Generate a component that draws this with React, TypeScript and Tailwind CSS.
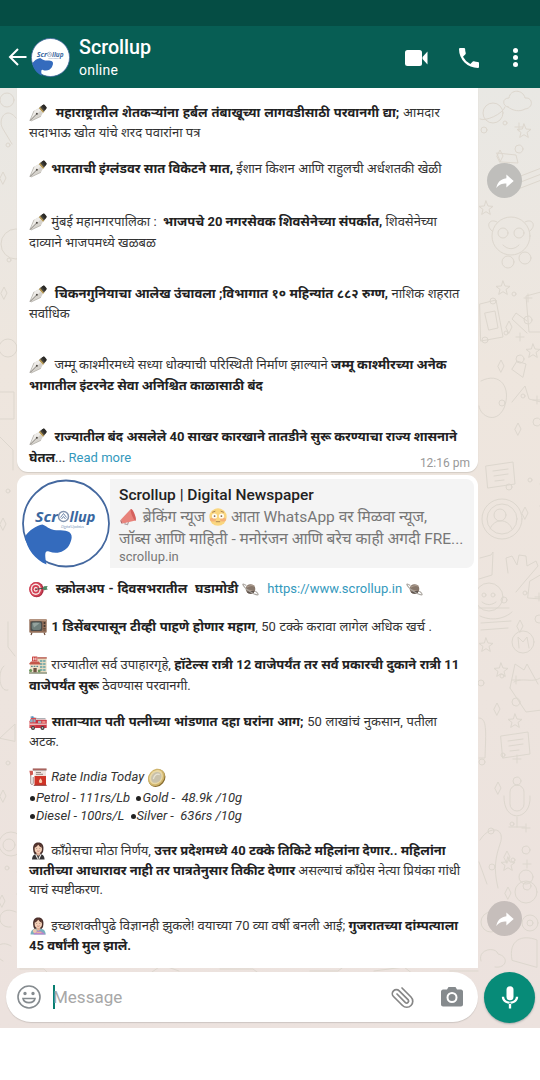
import type { ReactNode } from "react";

function Pen() {
  return (
    <svg viewBox="0 0 18 18" className="mr-px h-[18px] w-[18px] shrink-0">
      <path d="M10.5 3.2 14.6.6 17.6 4l-3 4.2z" fill="#45423b" />
      <path d="m14.6.6 1 .1 2 2.5L17.6 4 16 6.2 12.7 1.8z" fill="#2b2a27" />
      <path d="m9.6 4.2 1.6-1.1 3.9 4.6-1.2 1.4z" fill="#b79a55" />
      <path d="m9.7 4.3 4.1 4.6-1.9 3.5L2.2 17 1 16.2 5 6.8z" fill="#d6d3cd" />
      <path d="m9.7 4.3 1.9 2.2L1.5 16.5 1 16.2 5 6.8z" fill="#eeece8" />
      <path d="M1 16.6 7.6 10" stroke="#66615a" strokeWidth=".8" />
      <circle cx="7.9" cy="9.8" r="1" fill="#504c46" />
      <path d="M5 6.8 1 16.2l1.2.8 9.7-4.6" fill="none" stroke="#99958d" strokeWidth=".5" />
    </svg>
  );
}

function Target() {
  return (
    <svg viewBox="0 0 19 18" className="h-[18px] w-[19px] shrink-0">
      <ellipse cx="7.6" cy="9.6" rx="7.2" ry="7.7" fill="#a92f43" />
      <ellipse cx="6.8" cy="9.3" rx="6.6" ry="7.3" fill="#d44356" />
      <ellipse cx="6.8" cy="9.3" rx="5.1" ry="5.7" fill="#f6e9e8" />
      <ellipse cx="6.8" cy="9.3" rx="3.7" ry="4.2" fill="#d23e52" />
      <ellipse cx="6.8" cy="9.3" rx="2.1" ry="2.5" fill="#f7e9e8" />
      <circle cx="6.8" cy="9.3" r="1.1" fill="#c02d44" />
      <path d="m7 9.3 8-1.2" stroke="#454b45" strokeWidth="1" />
      <path d="m13.6 8.3 1.5-2 3.6-.3-1 2 1.1 1.6-3.6.6z" fill="#4f8a64" />
    </svg>
  );
}

function Planet() {
  return (
    <svg viewBox="0 0 18 18" className="h-[16px] w-[17px] shrink-0">
      <circle cx="9" cy="9" r="5.4" fill="#87776b" />
      <path d="M4.6 7c3-2 6-2.500 8.600-1.500M3.900 9.600c3 1 7 2.200 10 1.400" stroke="#ad9c8e" strokeWidth="1.200" fill="none" />
      <path d="M4.6 12a5.200 5.200 0 0 0 9.400-1.400z" fill="#5f554f" />
      <path d="M4.2 5C1 3-.2 3 .6 4.6 2 7.4 7 11.400 12 14c4.600 2.200 6.500 2 5.200.1-.5-.8-1.400-1.700-2.800-2.700" stroke="#a9a49e" strokeWidth="1.200" fill="none" />
    </svg>
  );
}

function Television() {
  return (
    <svg viewBox="0 0 18 18" className="mr-px h-[18px] w-[18px] shrink-0">
      <path d="M3 14.500 2 17M15 14.500l1 2.500" stroke="#6b4a38" strokeWidth="1.200" />
      <rect x=".3" y="1.300" width="17.400" height="13.400" rx="1" fill="#94705a" />
      <rect x=".3" y="1.300" width="17.400" height="1.700" fill="#b59580" />
      <rect x="1.500" y="3.300" width="11.800" height="9.800" rx="1.500" fill="#4b4c4b" />
      <rect x="2.700" y="4.300" width="9.400" height="7.600" rx="1.800" fill="#6f7f7b" />
      <path d="M3.600 5.300c2-.7 5-.7 7 0L5 9.500z" fill="#94a29d" />
      <circle cx="15.500" cy="5" r="1" fill="#3f332c" />
      <circle cx="15.500" cy="8" r="1" fill="#3f332c" />
      <path d="M14.300 10.500h2.400M14.300 12h2.400" stroke="#533d31" strokeWidth=".7" />
    </svg>
  );
}

function Hotel() {
  return (
    <svg viewBox="0 0 18 18" className="mr-px h-[18px] w-[18px] shrink-0">
      <rect x="9" y="2" width="8.500" height="14.500" fill="#e6d8bd" />
      <rect x="8.500" y="1.200" width="9.300" height="1.400" fill="#b85b50" />
      <path d="M11 5h5.500M11 8h5.500M11 11h5.500M11 14h5.500" stroke="#5da0a8" strokeWidth="1.500" />
      <path d="M13.700 3v13" stroke="#eedfc2" strokeWidth=".7" />
      <rect x="3" y=".5" width="5.500" height="5" rx=".6" fill="#cc4a45" />
      <path d="M4.500 1.500v3M7 1.500v3M4.500 3H7" stroke="#fff" strokeWidth=".7" />
      <rect x="1" y="7" width="9.500" height="9.700" fill="#f0e3cb" />
      <path d="M.5 7.300 2 5.500h7.800l1.300 1.800v1.200H.5z" fill="#c4574a" />
      <rect x="4.400" y="12" width="3.300" height="4.500" fill="#705443" />
      <path d="M2 10.300h8" stroke="#5b8990" strokeWidth="1.300" strokeDasharray="1.700 1" />
      <path d="M0 17h18" stroke="#899178" strokeWidth="1.500" />
      <circle cx="1.600" cy="14.500" r="1.600" fill="#6a9658" />
      <circle cx="10.200" cy="15" r="1.400" fill="#6a9658" />
    </svg>
  );
}

function FireEngine() {
  return (
    <svg viewBox="0 0 18 18" className="mr-px h-[18px] w-[18px] shrink-0">
      <path d="M1.500 4 8 5.600h8.500" stroke="#adb1b5" strokeWidth="1.300" fill="none" />
      <path d="M.5 8.200 2 5h5v10H.4z" fill="#d94b50" />
      <rect x="6.500" y="6.700" width="11.200" height="8.300" rx=".6" fill="#c93440" />
      <path d="M1.600 6.300h2.100v3H.8zM4.500 6.300h2v3h-2z" fill="#89b4c7" />
      <path d="M.4 11.200h17.300" stroke="#f1d5d3" strokeWidth="1.200" />
      <rect x="9" y="7.800" width="3.300" height="2.500" fill="#a7b1b6" />
      <rect x="13.200" y="7.800" width="3.300" height="2.500" fill="#ee8983" />
      <rect x="2.500" y="3.300" width="2" height="1.700" fill="#4a92c4" />
      <circle cx="4" cy="14.900" r="2" fill="#403b3e" />
      <circle cx="13.500" cy="14.900" r="2" fill="#403b3e" />
      <circle cx="4" cy="14.900" r=".8" fill="#c7c7c8" />
      <circle cx="13.500" cy="14.900" r=".8" fill="#c7c7c8" />
    </svg>
  );
}

function FuelPump() {
  return (
    <svg viewBox="0 0 18 18" className="mr-px h-[18px] w-[18px] shrink-0">
      <path d="M1.800 5v10c0 2 2.400 2 2.400 0V9" stroke="#9c8480" strokeWidth="1" fill="none" />
      <path d="M3.800.600h13.700V3H3.800z" fill="#b9aaa6" />
      <path d="M3.800.600h13.700v1.200H3.800z" fill="#a5514b" />
      <rect x="5.500" y="3" width="11.500" height="5" fill="#efe4de" />
      <path d="M7 4.500h5M7 6.300h7" stroke="#7f6f6a" strokeWidth=".8" />
      <rect x="5.500" y="8" width="11.500" height="9" fill="#cf3527" />
      <path d="M10 12.500c1.200-1.500 1.200-1.800 1.400-2.200.7 1.200 1.800 2 1.800 3.100 0 2-3.200 2-3.200 0z" fill="#f8c9a9" />
      <path d="M4.700 17.300h13" stroke="#8c312e" strokeWidth="1" />
      <path d="M.4 2.800h3.400l.4 3.800-2.900.9z" fill="#cf5a52" />
    </svg>
  );
}

function Coin() {
  return (
    <svg viewBox="0 0 18 18" className="h-[19px] w-[19px] shrink-0">
      <ellipse cx="9.400" cy="9.600" rx="7.500" ry="8.900" transform="rotate(40 9.400 9.600)" fill="#876b2e" />
      <ellipse cx="8.800" cy="8.900" rx="7.300" ry="8.800" transform="rotate(40 8.800 8.900)" fill="#cfb46c" />
      <ellipse cx="8.600" cy="8.700" rx="5.900" ry="7.200" transform="rotate(40 8.600 8.700)" fill="#ead8a5" />
      <ellipse cx="8.800" cy="8.900" rx="4.500" ry="5.600" transform="rotate(40 8.800 8.900)" fill="#c9c1aa" />
      <path d="M6 10.500c1-4 3.400-5.300 6-4.300" stroke="#e8e3d3" strokeWidth="1.200" fill="none" />
    </svg>
  );
}

function Woman({ baby = false }: { baby?: boolean }) {
  return (
    <svg viewBox="0 0 18 18" className="mr-px h-[18px] w-[18px] shrink-0">
      <path d="M4.500 10C3 3 5.500.5 9.300.5S15.500 3 14 10l-1.500 2h-7z" fill="#4a302c" />
      <path d={baby ? "M1.500 17.500c.3-5 3-6 7.800-6s7 1.500 7.500 6z" : "M3 17.500c.3-4.500 2.500-5.500 6.300-5.500s6 1 6.300 5.500z"} fill={baby ? "#79b0bd" : "#353436"} />
      <path d="M7.400 9.500h3.800v3l-2 1.500-1.800-1.500z" fill="#dfaf97" />
      <ellipse cx="9.300" cy="6.700" rx="3.700" ry="4.300" fill="#f2cfb7" />
      <path d="M5.500 5.800C7 5.300 8.500 4 9.300 2.500c1 2 2.300 2.800 3.800 3.300L12 2.500 9.500 1 6.500 2.500z" fill="#57352e" />
      <circle cx="7.800" cy="6.700" r=".4" fill="#412e28" />
      <circle cx="10.900" cy="6.700" r=".4" fill="#412e28" />
      <path d="M8 8.700c1 .8 1.800.8 2.700 0" stroke="#b85754" strokeWidth=".6" fill="none" />
      {baby ? (
        <>
          <path d="M4.500 17.500c1-4 5.500-4.500 9-2.500l3 2.500z" fill="#b885cc" />
          <circle cx="5.800" cy="14" r="2" fill="#eec7ac" />
          <path d="M7.500 15.500h5" stroke="#e7b59c" strokeWidth="1.200" />
        </>
      ) : (
        <>
          <path d="m7.200 12.300 2.100 4.300 2.100-4.300 1 .4-2.200 4.800H8.500l-2.300-4.800z" fill="#f2f0ed" />
          <path d="M9.300 14v3" stroke="#555" strokeWidth=".8" />
        </>
      )}
    </svg>
  );
}

function Megaphone() {
  return (
    <svg viewBox="0 0 18 18" className="mr-px ml-px h-[18px] w-[18px] shrink-0">
      <path d="M5 13.500v2.500l2.500.5 1.200-3" fill="none" stroke="#b4a6a8" strokeWidth="1.200" />
      <path d="M1 11.500 10.800 1l4.700 11.500L2.700 15.500z" fill="#e8837b" />
      <path d="M1 11.500.3 12.700l1 2.700 1.400.1z" fill="#b56263" />
      <ellipse cx="13.300" cy="6.800" rx="1.500" ry="6.300" transform="rotate(-21 13.300 6.800)" fill="#d4605c" />
    </svg>
  );
}

function Flushed() {
  return (
    <svg viewBox="0 0 18 18" className="h-[18px] w-[18px] shrink-0">
      <circle cx="9" cy="9" r="8.700" fill="#fad67f" />
      <ellipse cx="4" cy="11.600" rx="3" ry="2" fill="#f5b278" />
      <ellipse cx="14" cy="11.600" rx="3" ry="2" fill="#f5b278" />
      <circle cx="5.500" cy="8" r="2.600" fill="#fffdf3" />
      <circle cx="12.500" cy="8" r="2.600" fill="#fffdf3" />
      <circle cx="5.600" cy="8.100" r=".9" fill="#7d634e" />
      <circle cx="12.400" cy="8.100" r=".9" fill="#7d634e" />
      <path d="M7.200 13.700h3.600M3.500 4.200l2.500-.9M12 3.300l2.500.9" stroke="#a27c50" strokeWidth=".9" strokeLinecap="round" />
    </svg>
  );
}

function Logo({ className }: { className: string }) {
  return (
    <svg viewBox="0 0 88 88" className={className}>
      <circle cx="44" cy="44" r="43" fill="#fff" stroke="#44689f" strokeWidth="1.800" />
      <path d="M3 57C7 51 14 46 20.500 45c4.500 2 6.500 4.500 11.500 5.500 4 .5 9-.5 14 1.500 5.500 2.500 4 8.500 1 14-4 6.500-12 9-20 6-5-2-4 5-2.500 13C13 80 5 70 3 57z" fill="#346bbd" />
      <text x="13" y="42" fontSize="14.500" fontStyle="italic" fontWeight="700" fontFamily="'Open Sans', sans-serif" fill="#3a679f" textLength="23" lengthAdjust="spacingAndGlyphs">Scr</text>
      <circle cx="41.500" cy="37" r="5" fill="none" stroke="#8495b0" strokeWidth="1.500" />
      <path d="m38.500 38 3-4 3 4m-5 1.500 2-2.500 2 2.500" fill="none" stroke="#6d86aa" />
      <text x="47.500" y="42" fontSize="14.500" fontStyle="italic" fontWeight="700" fontFamily="'Open Sans', sans-serif" fill="#3a679f" textLength="26" lengthAdjust="spacingAndGlyphs">llup</text>
      <text x="39" y="48" fontSize="4" fontStyle="italic" fontFamily="'Open Sans', sans-serif" fill="#849abd" textLength="23">Digital Updates</text>
    </svg>
  );
}

function Line({ className = "", children }: { className?: string; children: ReactNode }) {
  return <div className={`flex h-5 shrink-0 items-center leading-5 whitespace-pre ${className}`}>{children}</div>;
}

function B({ children }: { children: ReactNode }) {
  return <b className="font-bold text-[#222]">{children}</b>;
}

function Bullet() {
  return <i className="mr-px size-[5px] shrink-0 rounded-full bg-[#222]" />;
}

function Doodle() {
  return (
    <svg viewBox="0 0 540 940" className="absolute inset-0 h-[940px] w-[540px]" fill="none" stroke="#ddd7ce" strokeWidth="1" strokeLinecap="round" strokeLinejoin="round">
      <defs>
        <g id="star"><path d="m0-7 2 5 5 .4-4 3 1.300 5L0 3.700l-4.300 2.700 1.300-5-4-3L-2-2z" /></g>
        <g id="note"><path d="m-14-9 27-4 2 22-27 4zM-7-4l15-2M-6 1 8-1M-5 6l9-1" /></g>
        <g id="face"><circle r="19" /><circle cx="-8" cy="-3" r="5" /><circle cx="8" cy="-3" r="5" /><path d="M-8 9c5 5 11 5 16 0M-19-5c-7-6-2-13 5-9M19-5c7-6 2-13-5-9" /></g>
        <g id="specks"><circle cx="-18" cy="-11" r="3" /><circle cx="17" cy="8" r="4" /><circle cx="3" cy="-18" r="2" /><path d="m-5 15 3-6 3 6-3 6zM17-18v8m-4-4h8" /></g>
      </defs>
      <path d="M508 19c-6-1-6-9 1-9 1-9 14-9 16 0 8-1 9 10 0 11-5 3-12 2-17-2z" />
      <circle cx="493" cy="25" r="10" /><path d="M480 31c5 3 23-5 25-12M497 65l19 2 2 8-17-1z" />
      <use href="#star" x="524" y="43" /><use href="#specks" x="502" y="53" />
      <path d="m513 91 31-12m-31 18 31-12m-31 18 31-12" />
      <use href="#star" x="486" y="120" /><use href="#face" x="511" y="148" /><circle cx="508" cy="174" r="6" /><circle cx="525" cy="170" r="6" />
      <use href="#star" x="503" y="200" /><use href="#specks" x="511" y="224" />
      <path d="m480 216 16-4 7 37-22 4zM485 225l10-2 3 17-9 2zM541 204l-15 4 3 36h14M527 245l-15-14 4-6 11 8" />
      <use href="#specks" x="503" y="263" /><use href="#star" x="533" y="263" />
      <path d="M481 293c19-10 31 7 23 27-8 17-24 8-25-2M512 314l13-16 4 13 12 3M512 281l5-8 9 3-3 13z" />
      <use href="#specks" x="520" y="326" /><use href="#note" x="500" y="387" />
      <circle cx="502" cy="431" r="20" /><circle cx="502" cy="431" r="15" /><circle cx="500" cy="427" r="6" /><path d="M490 441c4-11 18-11 22 0" />
      <use href="#specks" x="527" y="410" /><path d="m508 485-2-15 6-2 5 9 2-10 7 1 1 10 9-5 2 5-12 14-10 12" />
      <path d="m480 470 11-3 2-3-1 23-13 4M530 493l12-7v25l-14-1z" /><circle cx="489" cy="509" r="14" /><circle cx="484" cy="507" r="2" /><circle cx="493" cy="507" r="2" /><path d="M482 514c5 4 10 3 14 0" />
      <use href="#specks" x="522" y="523" /><path d="M479 520h30m-29 8c15 7 28 0 32-4m-31 11 30-2m-30 9 27-2" />
      <circle cx="523" cy="554" r="11" /><path d="m519 560-1-11 5 5 4-5 2 11" /><use href="#star" x="486" y="557" /><use href="#star" x="501" y="582" />
      <path d="m510 600 5-24 9 6 3-6 11 20M510 600l16 24 16-2M514 594c10-6 22 4 30-8" /><use href="#specks" x="499" y="606" />
      <path d="M479 630c8 0 7 12 6 40h-6" /><use href="#note" x="515" y="657" /><use href="#specks" x="500" y="685" /><use href="#star" x="515" y="633" />
      <rect x="510" y="697" width="14" height="26" rx="7" /><path d="M504 708c-1 28 28 25 26 0M517 729v10m-8 0h16" />
      <use href="#specks" x="509" y="754" /><path d="M480 752c10-16 26-12 20 4-4 12-7 24-2 44m-19-26 8 22" />
      <circle cx="526" cy="804" r="11" /><circle cx="526" cy="789" r="7" /><use href="#star" x="508" y="776" /><use href="#specks" x="510" y="790" />
      <circle cx="530" cy="835" r="8" /><circle cx="530" cy="835" r="3" /><circle cx="491" cy="834" r="10" /><path d="M512 872c-4-20 10-26 25-20v27zM481 873c-4-12 15-15 17-7 12 3 8 15-3 13" />
      <circle cx="7" cy="12" r="7" /><path d="M16 30C6 17-3 32 3 41l9 15" /><use href="#specks" x="5" y="75" /><circle cx="16" cy="156" r="15" /><use href="#specks" x="6" y="190" /><circle cx="8" cy="260" r="9" />
      <path d="M0 304h14v27H0m0 18 13 13v20" /><use href="#specks" x="5" y="421" /><path d="M8 534v25l7 9m-11 10c-7 5-5 27 4 24M0 650l15-14v17z" />
      <use href="#specks" x="5" y="693" /><circle cx="11" cy="756" r="12" /><circle cx="9" cy="757" r="6" /><use href="#specks" x="4" y="798" /><path d="M16 824c-19-9-22 17-5 15m0 19c-15-9-19 10-8 15" />
      <path d="M20 881h24l5 5h75M152 884l10-7 17 6M220 881h33l8 6M310 883h28l8-6M374 883l30-4 9 7M450 883h28" />
    </svg>
  );
}

function Forward({ className }: { className: string }) {
  return (
    <div className={`flex h-[35px] w-[35px] items-center justify-center rounded-full ${className}`}>
      <svg viewBox="0 0 24 24" className="h-[22px] w-[22px]" fill="#fff"><path d="M13.500 9V5l8 7-8 7v-4.200C8.500 14.800 5 16 2.500 20 3.500 14 6.500 10 13.500 9z" /></svg>
    </div>
  );
}

export default function App() {
  return (
    <div className="flex h-[1080px] w-[540px] flex-col overflow-hidden bg-white text-[#333] [font-family:Roboto,'Noto_Sans_Devanagari','Noto_Sans',sans-serif]">
      <div className="h-[26px] bg-[#054d44]" />
      <header className="flex h-[62px] items-center bg-[#075e54] text-white">
        <svg viewBox="0 0 20 20" className="ml-2 h-5 w-5" fill="none" stroke="white" strokeWidth="2"><path d="M18.500 10H2m8-8-8 8 8 8" /></svg>
        <Logo className="ml-[3px] h-[39px] w-[39px]" />
        <div className="ml-[9px] flex flex-col">
          <h1 className="text-[19.7px] leading-[25px] font-medium">Scrollup</h1>
          <p className="text-[14px] leading-[20px] tracking-[0.25px]">online</p>
        </div>
        <svg viewBox="0 0 24 16" className="mt-px ml-auto h-4 w-[24px]" fill="white"><rect x="1" width="17" height="16" rx="2.500" /><path d="m18.500 7 5-5.500v13l-5-5.500z" /></svg>
        <svg viewBox="3 3 18 18" className="mt-px ml-[31px] h-5 w-5" fill="white"><path d="M6.620 10.790a15.150 15.150 0 0 0 6.590 6.590l2.200-2.200a1 1 0 0 1 1.020-.24c1.120.37 2.330.57 3.570.57a1 1 0 0 1 1 1V20a1 1 0 0 1-1 1A17 17 0 0 1 3 4a1 1 0 0 1 1-1h3.500a1 1 0 0 1 1 1c0 1.250.2 2.450.57 3.570a1 1 0 0 1-.25 1.020z" /></svg>
        <div className="mr-[22px] ml-[34px] flex flex-col gap-[2px]">
          <i className="size-[5px] rounded-full bg-white" /><i className="size-[5px] rounded-full bg-white" /><i className="size-[5px] rounded-full bg-white" />
        </div>
      </header>

      <main className="relative h-[940px] bg-linear-to-b from-[#e9e8e4] via-[#eee6de] via-30% to-[#ece2de]">
        <Doodle />
        <div className="relative flex h-[880px]">
          <div className="ml-[17px] flex w-[461px] flex-col gap-[3px]">
            <article className="flex h-[384px] flex-col rounded-b-[11px] bg-white pt-[15px] pl-[12px] text-[13px] shadow-[0_1px_1px_#d2cbc4]">
              <Line className="[word-spacing:0.6px]"><Pen /><B>{"  महाराष्ट्रातील शेतकऱ्यांना हर्बल तंबाखूच्या लागवडीसाठी परवानगी द्या; "}</B>आमदार</Line>
              <Line>सदाभाऊ खोत यांचे शरद पवारांना पत्र</Line>
              <Line className="mt-4 [word-spacing:0.1px]"><Pen /><B>{" भारताची इंग्लंडवर सात विकेटने मात, "}</B>ईशान किशन आणि राहुलची अर्धशतकी खेळी</Line>
              <Line className="mt-[33px]"><Pen />{" मुंबई महानगरपालिका :  "}<B>{"भाजपचे 20 नगरसेवक शिवसेनेच्या संपर्कात, "}</B>शिवसेनेच्या</Line>
              <Line className="mt-px">दाव्याने भाजपमध्ये खळबळ</Line>
              <Line className="mt-[31px] [word-spacing:0.2px]"><Pen /><B>{"  चिकनगुनियाचा आलेख उंचावला ;विभागात १० महिन्यांत ८८२ रुग्ण, "}</B>नाशिक शहरात</Line>
              <Line>सर्वाधिक</Line>
              <Line className="mt-[31px]"><Pen />{"  जम्मू काश्मीरमध्ये सध्या धोक्याची परिस्थिती निर्माण झाल्याने "}<B>जम्मू काश्मीरच्या अनेक</B></Line>
              <Line className="mt-px"><B>भागातील इंटरनेट सेवा अनिश्चित काळासाठी बंद</B></Line>
              <Line className="mt-[31px]"><Pen /><B>{"  राज्यातील बंद असलेले 40 साखर कारखाने तातडीने सुरू करण्याचा राज्य शासनाने"}</B></Line>
              <Line className="mt-px"><B>घेतल</B>{"... "}<span className="text-[#3499bd]">Read more</span><span className="mt-[9px] mr-2 ml-auto text-[12px] text-[#999]">12:16 pm</span></Line>
            </article>

            <article className="h-[493px] rounded-t-[11px] bg-white px-[4px] pt-1 text-[13px]">
              <section className="flex h-[89px] overflow-hidden rounded-[8px]">
                <Logo className="ml-px h-[89px] w-[88px] shrink-0" />
                <div className="grow bg-[#f4f4f4] pl-[9px] text-[#777]">
                  <h2 className="mt-[5px] text-[15.5px] leading-[22px] font-medium whitespace-nowrap text-[#222]">Scrollup | Digital Newspaper</h2>
                  <Line className="h-[22px] text-[15.5px]"><Megaphone />{" ब्रेकिंग न्यूज "}<Flushed />{" आता WhatsApp वर मिळवा न्यूज,"}</Line>
                  <Line className="h-[22px] text-[15.5px]">जॉब्स आणि माहिती - मनोरंजन आणि बरेच काही अगदी FRE...</Line>
                  <p className="text-[13px] leading-[14px]">scrollup.in</p>
                </div>
              </section>
              <div className="px-2">
                <Line className="mt-[11px] [word-spacing:0.7px]"><Target /><B>{"  स्क्रोलअप - दिवसभरातील  घडामोडी "}</B><Planet /><span className="tracking-[0.05px] text-[#3499bd]">{"  https://www.scrollup.in "}</span><Planet /></Line>
                <Line className="mt-[18px] [word-spacing:0.3px]"><Television /><B>{" 1 डिसेंबरपासून टीव्ही पाहणे होणार महाग"}</B>, 50 टक्के करावा लागेल अधिक खर्च .</Line>
                <Line className="mt-[18px] [word-spacing:0.1px]"><Hotel />{" राज्यातील सर्व उपाहारगृहे, "}<B>हॉटेल्स रात्री 12 वाजेपर्यंत तर सर्व प्रकारची दुकाने रात्री 11</B></Line>
                <Line className="mt-px"><B>{"वाजेपर्यंत सुरू "}</B>ठेवण्यास परवानगी.</Line>
                <Line className="mt-4 [word-spacing:0.5px]"><FireEngine /><B>{" साताऱ्यात पती पत्नीच्या भांडणात दहा घरांना आग; "}</B>50 लाखांचं नुकसान, पतीला</Line>
                <Line>अटक.</Line>
                <Line className="mt-[15px] italic"><FuelPump />{" Rate India Today "}<Coin /></Line>
                <Line className="mt-px pl-px italic"><Bullet />{"Petrol - 111rs/Lb  "}<Bullet />{"Gold -  48.9k /10g"}</Line>
                <Line className="-mt-[2px] pl-px italic"><Bullet />{"Diesel - 100rs/L  "}<Bullet />{"Silver -  636rs /10g"}</Line>
                <Line className="mt-[15px]"><Woman />{" काँग्रेसचा मोठा निर्णय, "}<B>उत्तर प्रदेशमध्ये 40 टक्के तिकिटे महिलांना देणार.. महिलांना</B></Line>
                <Line><B>{"जातीच्या आधारावर नाही तर पात्रतेनुसार तिकीट देणार "}</B>असल्याचं काँग्रेस नेत्या प्रियंका गांधी</Line>
                <Line className="-mt-px">याचं स्पष्टीकरण.</Line>
                <Line className="mt-4"><Woman baby />{" इच्छाशक्तीपुढे विज्ञानही झुकले! वयाच्या 70 व्या वर्षी बनली आई; "}<B>गुजरातच्या दांम्पत्याला</B></Line>
                <Line><B>45 वर्षांनी मुल झाले.</B></Line>
              </div>
            </article>
          </div>
          <aside className="ml-[9px]"><Forward className="mt-[75px] bg-[#bfbebb]" /><Forward className="mt-[703px] bg-[#c6bebb]" /></aside>
        </div>
        <footer className="relative mt-1 flex pl-[6px]">
          <div className="flex h-[50px] w-[472px] items-center rounded-full bg-white shadow-[0_1px_1px_#cec6c2]">
            <svg viewBox="0 0 24 24" className="ml-[11px] size-6" fill="none" stroke="#858b8f" strokeWidth="1.600"><circle cx="12" cy="12" r="11" /><circle cx="8" cy="8.500" r=".9" fill="#858b8f" /><circle cx="16" cy="8.500" r=".9" fill="#858b8f" /><path d="M6 13.500h12c-1 5.500-11 5.500-12 0z" /></svg>
            <i className="ml-3 h-6 w-[2px] bg-[#087e70]" />
            <span className="-ml-[2px] pt-[2px] text-[17px] text-[#a7a7a7]">Message</span>
            <svg viewBox="0 0 24 24" className="mr-[25px] ml-auto size-6 -rotate-90" fill="none" stroke="#868686" strokeWidth="1.700" strokeLinecap="round"><path d="m21 11-9 9a6 6 0 0 1-8.500-8.500l9-9a4 4 0 0 1 5.700 5.700l-9 9a2 2 0 0 1-2.800-2.800L15 6" /></svg>
            <svg viewBox="0 0 24 24" className="mr-[14px] size-6" fill="#858a8d"><path fillRule="evenodd" d="M8.500 2h7L17 4.500h4c1 0 2 1 2 2v13c0 1-1 2-2 2H3c-1 0-2-1-2-2v-13c0-1 1-2 2-2h4zM12 7a5.500 5.500 0 1 0 0 11 5.500 5.500 0 0 0 0-11zm0 2a3.500 3.500 0 1 1 0 7 3.500 3.500 0 0 1 0-7z" /></svg>
          </div>
          <div className="ml-[6px] flex size-[51px] items-center justify-center rounded-full bg-[#078b78] shadow-[0_1px_2px_#aaa]">
            <svg viewBox="0 0 24 24" className="size-[28px]" fill="white"><rect x="9" y="2" width="6" height="12" rx="3" /><path d="M5 11c0 8 14 8 14 0h-2c0 5.500-10 5.500-10 0zM11 16h2v5h-2z" /></svg>
          </div>
        </footer>
      </main>
    </div>
  );
}
